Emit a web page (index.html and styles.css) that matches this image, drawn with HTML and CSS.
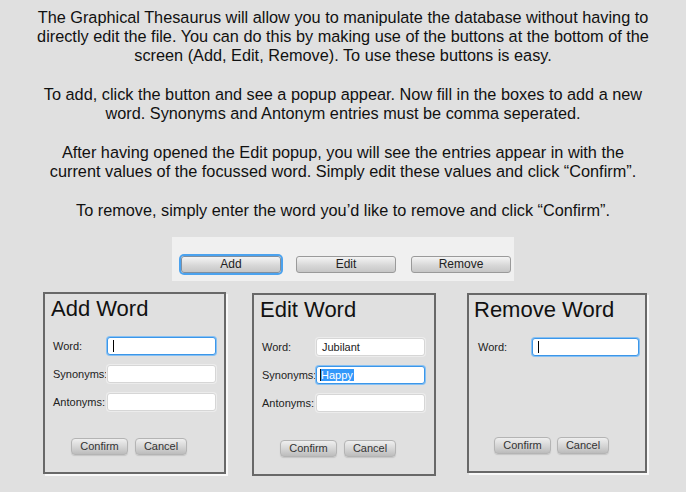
FILE: index.html
```html
<!DOCTYPE html>
<html lang="en">
<head>
<meta charset="utf-8">
<title>Graphical Thesaurus Help</title>
<link rel="stylesheet" href="styles.css">
</head>
<body>
<div class="intro">
  <p>The Graphical Thesaurus will allow you to manipulate the database without having to<br>directly edit the file. You can do this by making use of the buttons at the bottom of the<br>screen (Add, Edit, Remove). To use these buttons is easy.</p>
  <p>To add, click the button and see a popup appear. Now fill in the boxes to add a new<br>word. Synonyms and Antonym entries must be comma seperated.</p>
  <p>After having opened the Edit popup, you will see the entries appear in with the<br>current values of the focussed word. Simply edit these values and click “Confirm”.</p>
  <p>To remove, simply enter the word you’d like to remove and click “Confirm”.</p>
</div>

<div class="toolbar">
  <button class="tbtn focused">Add</button>
  <button class="tbtn">Edit</button>
  <button class="tbtn">Remove</button>
</div>

<div class="dialogs">
  <div class="dialog dialog-add">
    <div class="title">Add Word</div>
    <div class="form">
      <div class="row"><span class="label">Word:</span><div class="field focus"><span class="caret"></span></div></div>
      <div class="row"><span class="label">Synonyms:</span><div class="field"></div></div>
      <div class="row"><span class="label">Antonyms:</span><div class="field"></div></div>
    </div>
    <div class="actions">
      <button class="dbtn confirm">Confirm</button>
      <button class="dbtn cancel">Cancel</button>
    </div>
  </div>

  <div class="dialog dialog-edit">
    <div class="title">Edit Word</div>
    <div class="form">
      <div class="row"><span class="label">Word:</span><div class="field">Jubilant</div></div>
      <div class="row"><span class="label">Synonyms:</span><div class="field focus sel"><span class="hl">Happy</span></div></div>
      <div class="row"><span class="label">Antonyms:</span><div class="field"></div></div>
    </div>
    <div class="actions">
      <button class="dbtn confirm">Confirm</button>
      <button class="dbtn cancel">Cancel</button>
    </div>
  </div>

  <div class="dialog dialog-remove">
    <div class="title">Remove Word</div>
    <div class="form">
      <div class="row"><span class="label">Word:</span><div class="field focus"><span class="caret"></span></div></div>
    </div>
    <div class="actions">
      <button class="dbtn confirm">Confirm</button>
      <button class="dbtn cancel">Cancel</button>
    </div>
  </div>
</div>
</body>
</html>
```

FILE: styles.css
```css
html, body {
  margin: 0;
  padding: 0;
}

body {
  margin: 8px;
  background: #e0e0e0;
  color: #000;
  font-family: "Liberation Sans", Arial, sans-serif;
  font-size: 16px;
  line-height: 19px;
}

.intro {
  text-align: center;
  font-size: 16.3px;
  color: #111;
}

.intro p {
  margin: 0 0 20px 0;
}

.intro p:last-child {
  margin-bottom: 0;
}

.toolbar {
  width: 342px;
  height: 44px;
  box-sizing: border-box;
  margin: 17px auto 0;
  padding: 19px 3px 0 9px;
  background: #f0f0f0;
  display: flex;
  gap: 15px;
  align-items: flex-start;
}

.tbtn {
  width: 100px;
  height: 17px;
  box-sizing: border-box;
  padding: 0;
  margin: 0;
  font-family: "Liberation Sans", Arial, sans-serif;
  font-size: 12px;
  line-height: 15px;
  color: #222;
  border: 1px solid #9a9a9a;
  border-radius: 3px;
  background: linear-gradient(#f4f4f4, #d8d8d8 55%, #c6c6c6);
}

.tbtn.focused {
  box-shadow: 0 0 0 2px #4ba2ee;
  border-color: #7f8fa0;
}

.dialogs {
  display: flex;
  align-items: flex-start;
  margin-top: 11px;
  padding-left: 35px;
}

.dialog {
  box-sizing: border-box;
  border: 2px solid #686868;
  background: #e0e0e0;
  padding: 2px 6px 17px 6px;
  display: flex;
  flex-direction: column;
  text-align: left;
}

.dialog-add {
  width: 183px;
  height: 182px;
  box-shadow: 2px 2px 0 #f8f8f8;
}

.dialog-edit {
  width: 184px;
  height: 183px;
  margin-top: 1px;
  margin-left: 26px;
}

.dialog-remove {
  width: 180px;
  height: 180px;
  margin-top: 1px;
  margin-left: 31px;
  padding-left: 5px;
  box-shadow: 2px 2px 0 #f8f8f8;
}

.title {
  font-size: 22px;
  line-height: 26px;
  color: #111;
}

.form {
  margin-top: 15px;
  display: flex;
  flex-direction: column;
  gap: 10px;
}

.row {
  display: flex;
  align-items: center;
  height: 18px;
  margin-left: 2px;
}

.dialog-remove .row {
  margin-left: 4px;
}

.label {
  width: 54px;
  flex: none;
  font-size: 11px;
  line-height: 13px;
  color: #222;
}

.field {
  width: 109px;
  height: 18px;
  box-sizing: border-box;
  background: #fff;
  border: 1px solid #d6d6d6;
  border-radius: 3px;
  box-shadow: 0 0 0 1px #ececec;
  padding: 0 5px;
  display: flex;
  align-items: center;
  font-size: 11px;
  color: #222;
}

.field.focus {
  border-color: #3c96e8;
  box-shadow: 0 0 0 1px #86c0f3;
}

.field.sel {
  padding-left: 3px;
}

.caret {
  display: inline-block;
  width: 1px;
  height: 12px;
  background: #000;
}

.hl {
  background: #3398fa;
  color: #fff;
  border-left: 1px solid #111;
  padding: 0 1px 0 0;
  line-height: 12px;
}

.actions {
  margin-top: auto;
  margin-left: 20px;
  display: flex;
  gap: 7px;
}

.dialog-remove .actions {
  gap: 6px;
}

.dbtn {
  height: 17px;
  box-sizing: border-box;
  padding: 0;
  margin: 0;
  font-family: "Liberation Sans", Arial, sans-serif;
  font-size: 11px;
  line-height: 15px;
  color: #333;
  border: 1px solid #b4b4b4;
  border-radius: 4px;
  background: linear-gradient(#efefef, #d4d4d4 55%, #bcbcbc);
  box-shadow: 0 1px 1px rgba(0, 0, 0, 0.12);
}

.confirm {
  width: 57px;
}

.cancel {
  width: 52px;
}
```
